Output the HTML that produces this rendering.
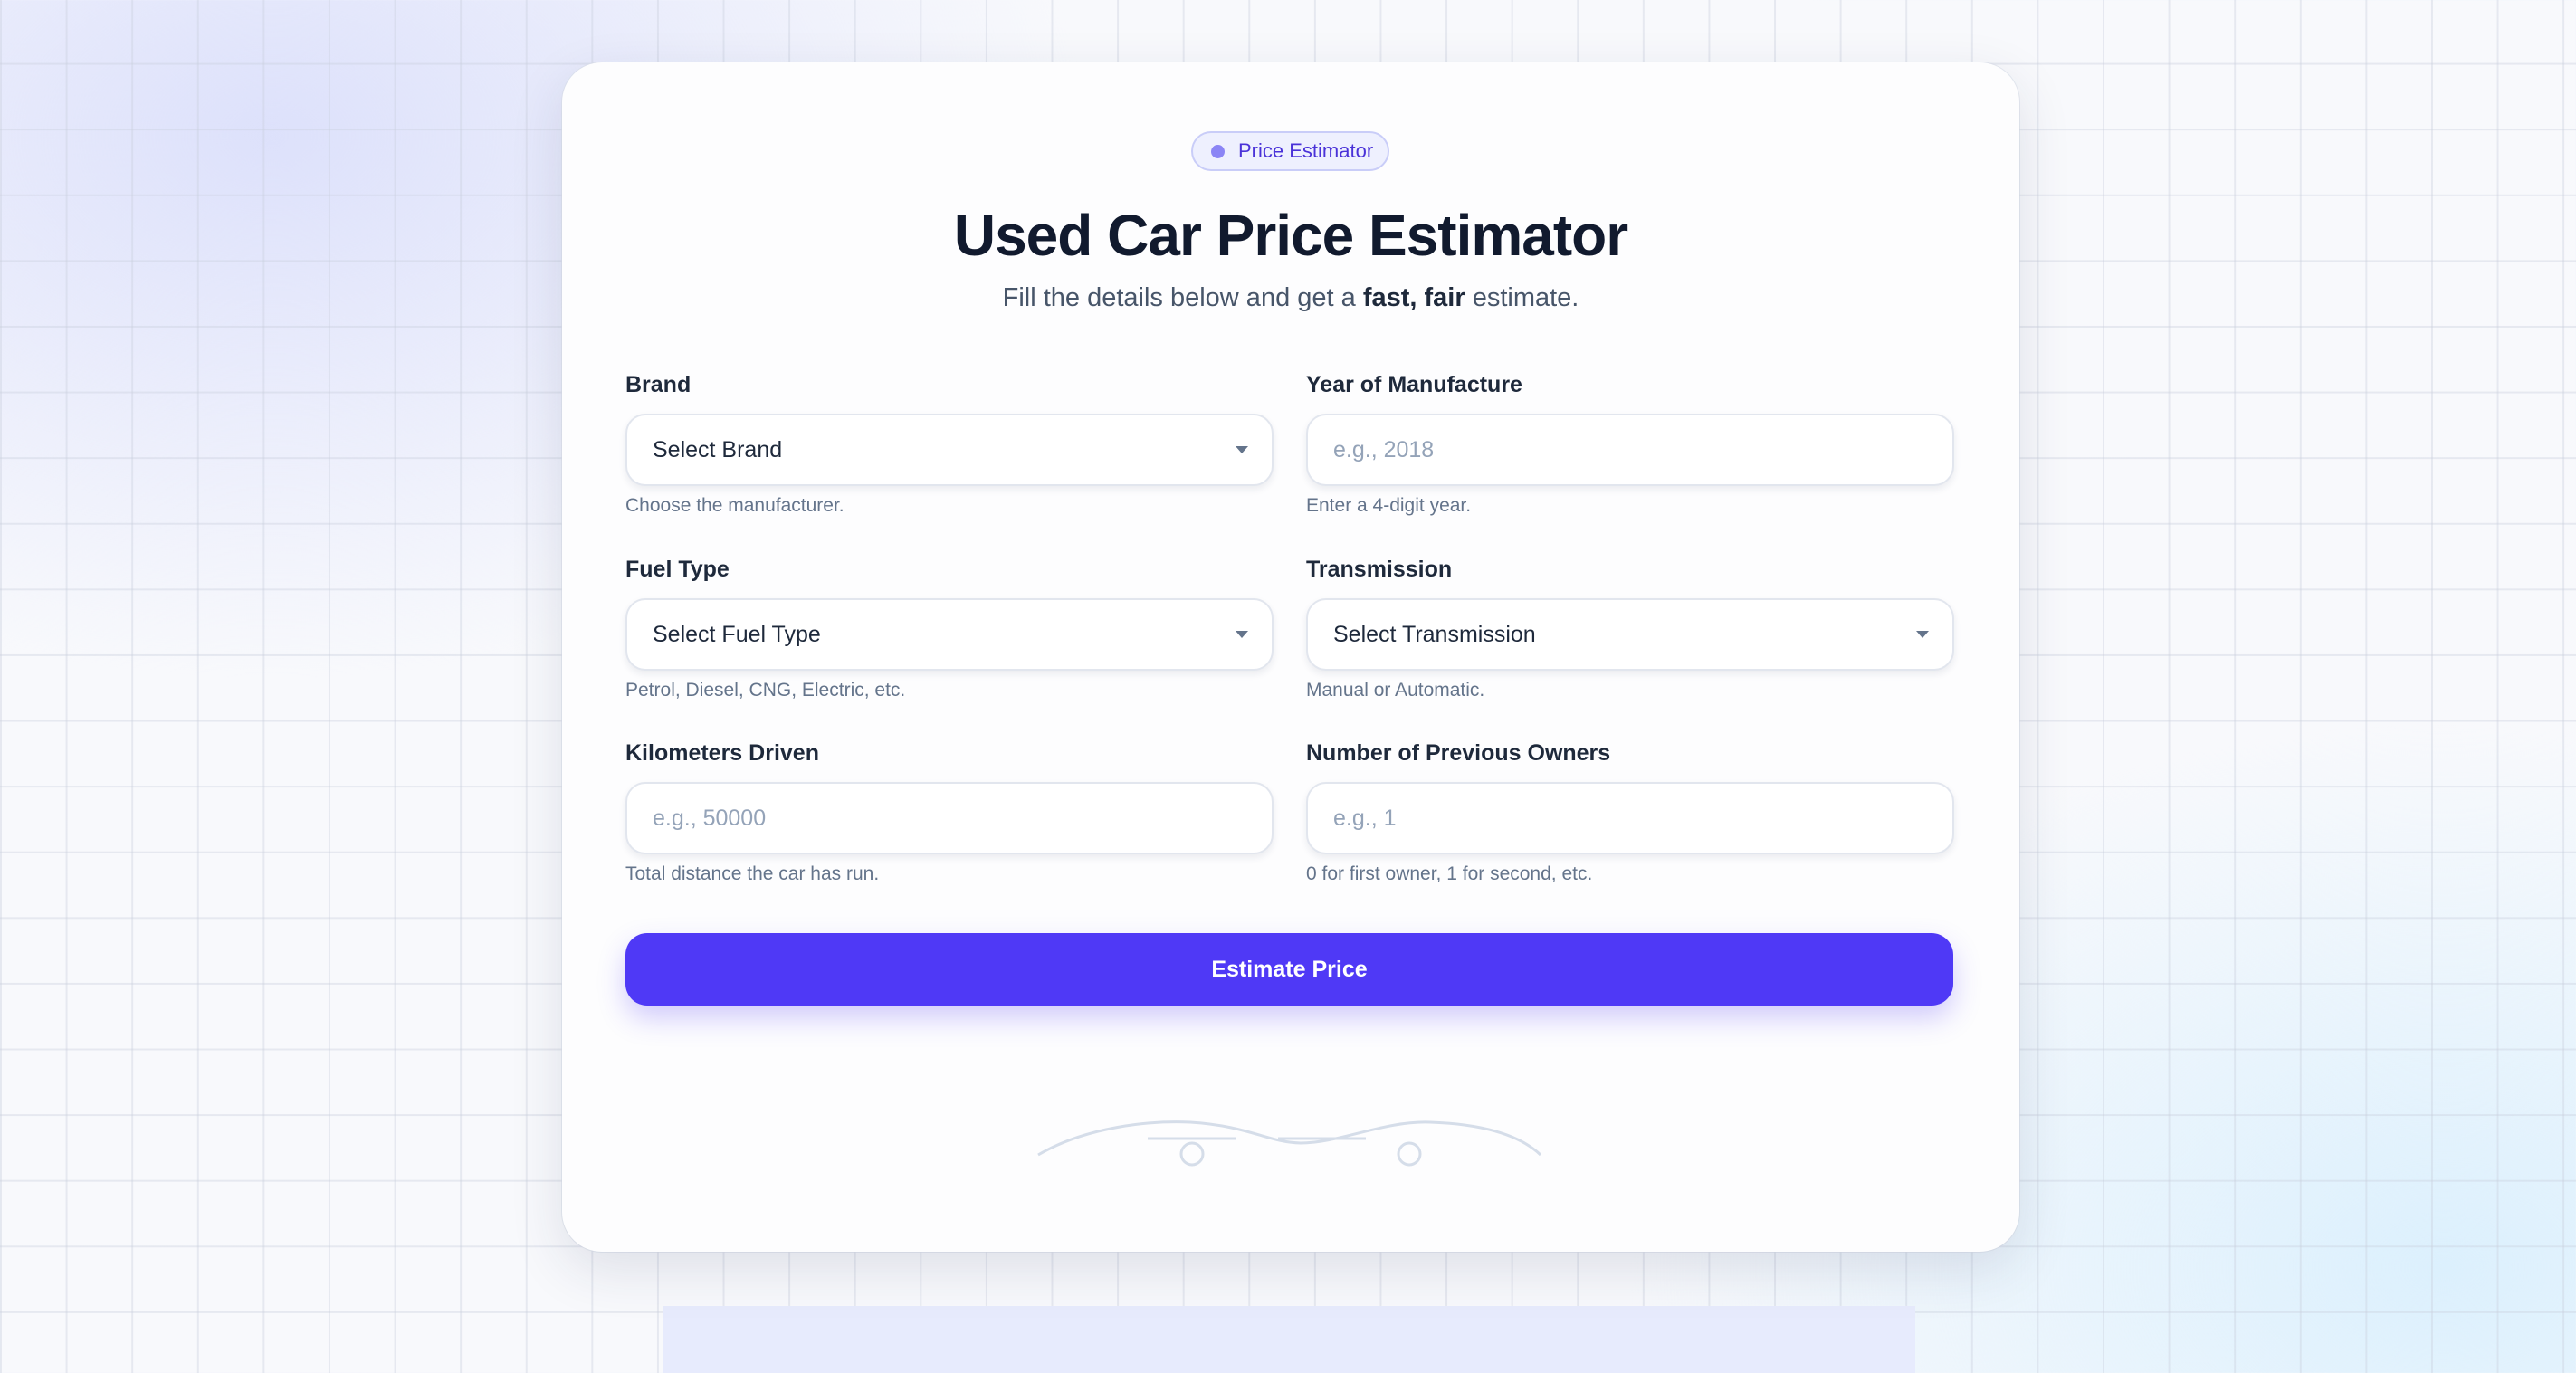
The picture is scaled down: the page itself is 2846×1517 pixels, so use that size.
<!DOCTYPE html>
<html><head><meta charset="utf-8"><style>
*{box-sizing:border-box;margin:0;padding:0}
html,body{width:2846px;height:1517px;overflow:hidden}
body{font-family:"Liberation Sans",sans-serif;position:relative;
background:
linear-gradient(rgba(200,206,220,.38) 2px,transparent 2px) 0 -3px/72.6px 72.6px,
linear-gradient(90deg,rgba(200,206,220,.38) 2px,transparent 2px) 0 0/72.6px 72.6px,
radial-gradient(ellipse 900px 600px at 300px 150px,#dde1fb,rgba(221,225,251,0) 100%),
radial-gradient(ellipse 900px 600px at 2700px 1400px,#dcf0fd,rgba(220,240,253,0) 100%),
#f8f9fc;}
.blk{position:absolute;left:733px;top:1443px;width:1383px;height:80px;background:#e7ebfd}
.card{position:absolute;left:621px;top:69px;width:1610px;height:1314px;background:#fdfdfe;border-radius:44px;box-shadow:0 20px 60px rgba(30,40,80,.12),0 0 0 1px rgba(220,225,235,.6)}
.badge{position:absolute;left:695px;top:76px;width:219px;height:44px;border-radius:22px;background:#eef0fe;border:2px solid #c9cdf8;color:#4a32d8;font-size:22px;line-height:40px;padding-left:50px}
.badge:before{content:"";position:absolute;left:20px;top:13px;width:15px;height:15px;border-radius:50%;background:#8b85f5}
h1{position:absolute;left:0;width:100%;top:156px;line-height:70px;text-align:center;font-size:64px;font-weight:900;color:#111a2e;letter-spacing:-1px}
.sub{position:absolute;left:0;width:100%;top:242px;line-height:36px;text-align:center;font-size:29px;color:#475569}
.sub b{color:#1e293b}
.lbl{position:absolute;font-size:25px;font-weight:bold;color:#1e293b}
.in{position:absolute;width:716px;height:80px;border-radius:22px;background:#fff;border:2px solid #e2e6ee;box-shadow:0 4px 8px rgba(30,40,80,.08);font-size:25px;line-height:76px;padding-left:28px;color:#1e293b}
.in.ph{color:#94a3b8}
.in.sel:after{content:"";position:absolute;right:26px;top:34px;border-left:7px solid transparent;border-right:7px solid transparent;border-top:8px solid #64748b}
.hint{position:absolute;font-size:21px;color:#64748b}
.btn{position:absolute;left:70px;top:962px;width:1467px;height:80px;border-radius:24px;background:#4f39f6;color:#fff;font-size:25px;font-weight:bold;text-align:center;line-height:80px;box-shadow:0 14px 30px rgba(79,57,246,.25)}
svg{position:absolute;left:0;top:0}
</style></head><body>
<div class="blk"></div>
<div class="card">
<div class="badge">Price Estimator</div>
<h1>Used Car Price Estimator</h1>
<div class="sub">Fill the details below and get a <b>fast, fair</b> estimate.</div>

<div class="lbl" style="left:70px;top:342px">Brand</div>
<div class="in sel" style="left:70px;top:388px">Select Brand</div>
<div class="hint" style="left:70px;top:478px">Choose the manufacturer.</div>
<div class="lbl" style="left:822px;top:342px">Year of Manufacture</div>
<div class="in ph" style="left:822px;top:388px">e.g., 2018</div>
<div class="hint" style="left:822px;top:478px">Enter a 4-digit year.</div>

<div class="lbl" style="left:70px;top:546px">Fuel Type</div>
<div class="in sel" style="left:70px;top:592px">Select Fuel Type</div>
<div class="hint" style="left:70px;top:682px">Petrol, Diesel, CNG, Electric, etc.</div>
<div class="lbl" style="left:822px;top:546px">Transmission</div>
<div class="in sel" style="left:822px;top:592px">Select Transmission</div>
<div class="hint" style="left:822px;top:682px">Manual or Automatic.</div>

<div class="lbl" style="left:70px;top:749px">Kilometers Driven</div>
<div class="in ph" style="left:70px;top:795px">e.g., 50000</div>
<div class="hint" style="left:70px;top:885px">Total distance the car has run.</div>
<div class="lbl" style="left:822px;top:749px">Number of Previous Owners</div>
<div class="in ph" style="left:822px;top:795px">e.g., 1</div>
<div class="hint" style="left:822px;top:885px">0 for first owner, 1 for second, etc.</div>

<div class="btn">Estimate Price</div>
</div>
<svg width="2846" height="1517"><g fill="none" stroke="#d5dde9" stroke-width="3">
<path d="M1147 1276 C1200 1245 1270 1238 1315 1240 C1380 1244 1400 1262 1437 1263 C1480 1263 1530 1238 1580 1240 C1640 1242 1680 1255 1702 1276"/>
<path d="M1268 1258 H1365 M1412 1258 H1509"/>
<circle cx="1317" cy="1275" r="12"/><circle cx="1557" cy="1275" r="12"/></g></svg>
</body></html>
